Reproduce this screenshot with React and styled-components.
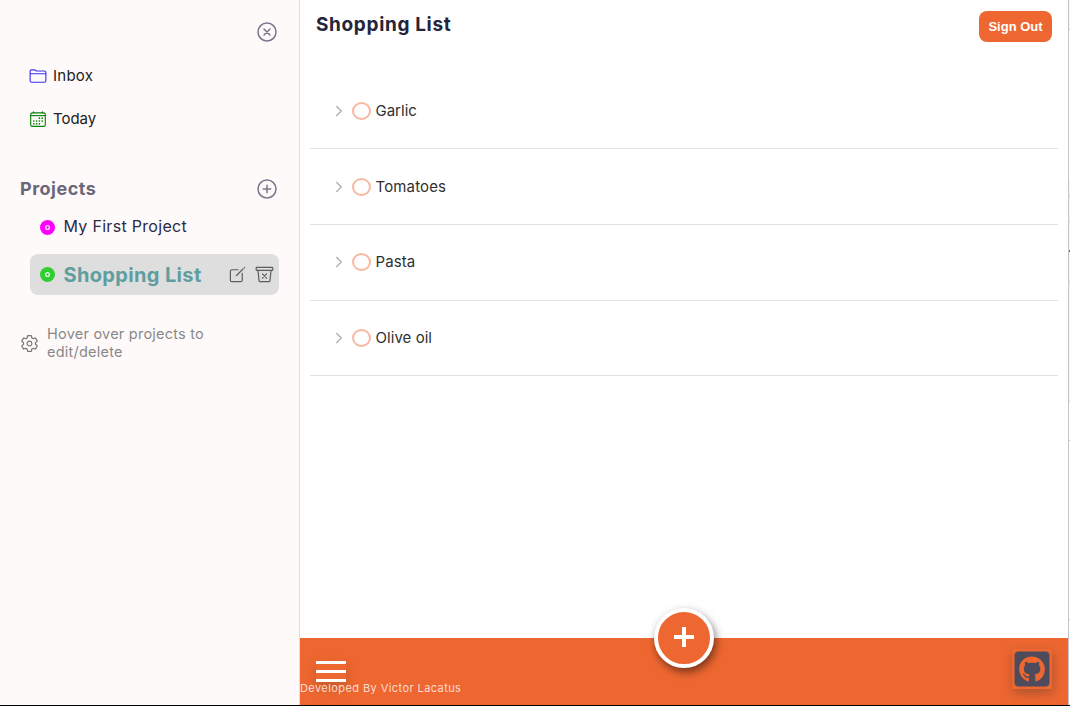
import React from "react";
import styled, { createGlobalStyle } from "styled-components";
import {
  IoCloseCircleOutline, IoAddCircleOutline, IoFolderOutline, IoCalendarOutline,
  IoCreateOutline, IoTrashBinOutline, IoSettingsOutline, IoChevronForwardOutline,
} from "react-icons/io5";
import { FaGithubSquare } from "react-icons/fa";

const GlobalStyle = createGlobalStyle`
  * { box-sizing: border-box; }
  body { margin: 0; background: #fff; font-family: Inter, "Open Sans", sans-serif; }
  h1, h2, p, ul { margin: 0; padding: 0; }
  ul { list-style: none; }
  svg { display: block; flex-shrink: 0; }
  button { border: 0; padding: 0; background: none; color: inherit; }
`;
const Page = styled.div`
  display: grid;
  grid-template-columns: 300px 768px 2px;
  height: 706px;
  overflow: hidden;
  border-bottom: 1px solid #000;
`;
const Sidebar = styled.aside`
  background: #fffafa;
  border-right: 1px solid #dedee1;
  padding-top: 20px;
`;
const Label = styled.span`
  font-size: ${(p) => p.$size || 15}px;
  font-weight: ${(p) => p.$weight || 400};
  letter-spacing: ${(p) => p.$track || 0}px;
  color: ${(p) => p.$color || "#222"};
  line-height: ${(p) => p.$line || 20}px;
  white-space: nowrap;
`;
const CloseRow = styled.div`
  display: flex;
  justify-content: flex-end;
  padding-right: 20px;
  height: 34px;
  color: #79758a;
`;
const NavItem = styled.div`
  display: flex;
  align-items: center;
  gap: 6.5px;
  height: 43px;
  padding-left: 28.5px;
  svg { color: ${(p) => p.$color}; }
`;
const ProjectsHeader = styled.div`
  display: flex;
  align-items: center;
  justify-content: space-between;
  height: 30px;
  margin-top: 34px;
  padding: 0 20px;
  color: #79758a;
`;
const Project = styled.li`
  display: flex;
  align-items: center;
  height: ${(p) => (p.$active ? 41 : 40)}px;
  margin: ${(p) => (p.$active ? "7px 20px 0 30px" : "3px 20px 0 30px")};
  padding: 0 5px 0 10px;
  gap: 8.5px;
  border-radius: 8px;
  background: ${(p) => (p.$active ? "#dedede" : "transparent")};
  > span { padding-bottom: ${(p) => (p.$active ? 0 : 2)}px; }
`;
const Disc = styled.svg`
  width: 15px;
  height: 15px;
  color: ${(p) => p.$dot};
`;
const Actions = styled.div`
  display: flex;
  gap: 8.5px;
  margin-left: auto;
  color: #5d5d5d;
`;
const Hint = styled.div`
  display: flex;
  align-items: center;
  gap: 8px;
  margin: 30px 0 0 20px;
  color: #777;
`;
const Main = styled.main`
  display: flex;
  flex-direction: column;
  background: #fff;
`;
const Header = styled.header`
  display: flex;
  justify-content: space-between;
  height: 73.5px;
  padding: 11px 16px 0;
`;
const SignOut = styled.button`
  width: 73px;
  height: 31px;
  border-radius: 8px;
  background: #ee6730;
  color: #fff;
  font: bold 13px "Liberation Sans", sans-serif;
`;
const TaskList = styled.ul`
  flex: 1;
  padding: 0 10px;
`;
const Task = styled.li`
  display: flex;
  align-items: center;
  height: 75.7px;
  padding-left: 21px;
  border-bottom: 1px solid #e1e1e1;
  > svg { color: #b3b3b3; }
`;
const Check = styled.span`
  width: 19px;
  height: 18px;
  margin: 0 4.5px 0 5px;
  border: 2px solid #f8b8a0;
  border-radius: 50%;
`;
const Footer = styled.footer`
  position: relative;
  height: 67px;
  background: #ee6730;
  display: flex;
  justify-content: space-between;
  padding-top: 11px;
`;
const FooterLeft = styled.div`
  padding-top: 12px;
`;
const Menu = styled.button`
  display: flex;
  flex-direction: column;
  justify-content: space-between;
  width: 30px;
  height: 21px;
  margin-left: 16px;
  box-shadow: 0 5px 12px rgba(80, 50, 30, 0.25);
`;
const Bar = styled.span`
  height: 3px;
  background: #fff;
`;
const Credit = styled.p`
  font-size: 11px;
  line-height: 14px;
  letter-spacing: 0.42px;
  color: #fbdccf;
  margin-top: -1px;
`;
const AddButton = styled.button`
  position: absolute;
  left: 354px;
  top: -30px;
  width: 60px;
  height: 60px;
  display: flex;
  align-items: center;
  justify-content: center;
  border: 4px solid #fff;
  border-radius: 50%;
  background: #ee6730;
  box-shadow: 2px 4px 9px rgba(0, 0, 0, 0.5);
`;
const PlusGlyph = styled.svg`
  width: 20px;
  height: 20px;
  margin-bottom: 2px;
`;
const Github = styled.a`
  display: flex;
  align-items: center;
  justify-content: center;
  width: 40px;
  height: 40px;
  margin-right: 16px;
  color: #4d4b5c;
  background: #ee6730;
  box-shadow: 1px 4px 10px rgba(70, 50, 50, 0.4);
`;
const Edge = styled.div`
  border-left: 1px solid #c6c6cd;
  background: linear-gradient(#3974d9, #3974d9) 0 250px / 1px 2px no-repeat,
    linear-gradient(#c9cad2, #c9cad2) 0 29px / 1px 1px no-repeat,
    linear-gradient(#c9cad2, #c9cad2) 0 195px / 1px 1px no-repeat,
    linear-gradient(#c9cad2, #c9cad2) 0 221px / 1px 1px no-repeat,
    linear-gradient(#c9cad2, #c9cad2) 0 281px / 1px 1px no-repeat,
    linear-gradient(#c9cad2, #c9cad2) 0 401px / 1px 1px no-repeat,
    linear-gradient(#c9cad2, #c9cad2) 0 440px / 1px 1px no-repeat,
    linear-gradient(#c9cad2, #c9cad2) 0 619px / 1px 1px no-repeat,
    linear-gradient(#f3f4fa, #f3f4fa) 0 0 / 1px 30px no-repeat,
    linear-gradient(#f3f4fa, #f3f4fa) 0 180px / 1px 221px no-repeat, #fff;
`;

const tasks = [
  { name: "Garlic", track: 0 },
  { name: "Tomatoes", track: 0.15 },
  { name: "Pasta", track: 0.1 },
  { name: "Olive oil", track: 0.05 },
];

const ProjectDot = ({ color }) => (
  <Disc viewBox="0 0 15 15" $dot={color}>
    <circle cx="7.5" cy="7.5" r="7.5" fill="currentColor" />
    <circle cx="7.5" cy="7.5" r="1.9" fill="none" stroke="#fff" strokeOpacity=".85" strokeWidth="1.3" />
  </Disc>
);

export default function App() {
  return (
    <>
      <GlobalStyle />
      <Page>
        <Sidebar>
          <CloseRow><IoCloseCircleOutline size={24} /></CloseRow>
          <NavItem $color="#3b2ff5"><IoFolderOutline size={18} /><Label $track={0.25}>Inbox</Label></NavItem>
          <NavItem $color="#088008"><IoCalendarOutline size={18} /><Label $track={-0.05}>Today</Label></NavItem>
          <ProjectsHeader>
            <Label as="h2" $size={18} $weight={700} $track={0.5} $color="#6a6778">Projects</Label>
            <IoAddCircleOutline size={24} />
          </ProjectsHeader>
          <ul>
            <Project>
              <ProjectDot color="#ff00ff" /><Label $size={16} $track={0.3} $color="#2b2a45">My First Project</Label>
            </Project>
            <Project $active>
              <ProjectDot color="#32cd32" /><Label $size={20} $weight={700} $track={0.35} $color="#5f9ea0">Shopping List</Label>
              <Actions><IoCreateOutline size={19} /><IoTrashBinOutline size={19} /></Actions>
            </Project>
          </ul>
          <Hint>
            <IoSettingsOutline size={19} />
            <Label as="p" $size={14.5} $line={18} $track={0.23} $color="#888">Hover over projects to<br />edit/delete</Label>
          </Hint>
        </Sidebar>
        <Main>
          <Header>
            <Label as="h1" $size={19} $weight={700} $track={0.65} $line={27} $color="#25243a">Shopping List</Label>
            <SignOut>Sign Out</SignOut>
          </Header>
          <TaskList>
            {tasks.map((t) => (
              <Task key={t.name}>
                <IoChevronForwardOutline size={16} /><Check />
                <Label $track={t.track} $color="#303030">{t.name}</Label>
              </Task>
            ))}
          </TaskList>
          <Footer>
            <FooterLeft>
              <Menu aria-label="Menu"><Bar /><Bar /><Bar /></Menu>
              <Credit>Developed By Victor Lacatus</Credit>
            </FooterLeft>
            <AddButton aria-label="Add task">
              <PlusGlyph viewBox="0 0 20 20"><path d="M10 0v20M0 10h20" stroke="#fff" strokeWidth="4" /></PlusGlyph>
            </AddButton>
            <Github aria-label="GitHub"><FaGithubSquare size={40} /></Github>
          </Footer>
        </Main>
        <Edge />
      </Page>
    </>
  );
}
